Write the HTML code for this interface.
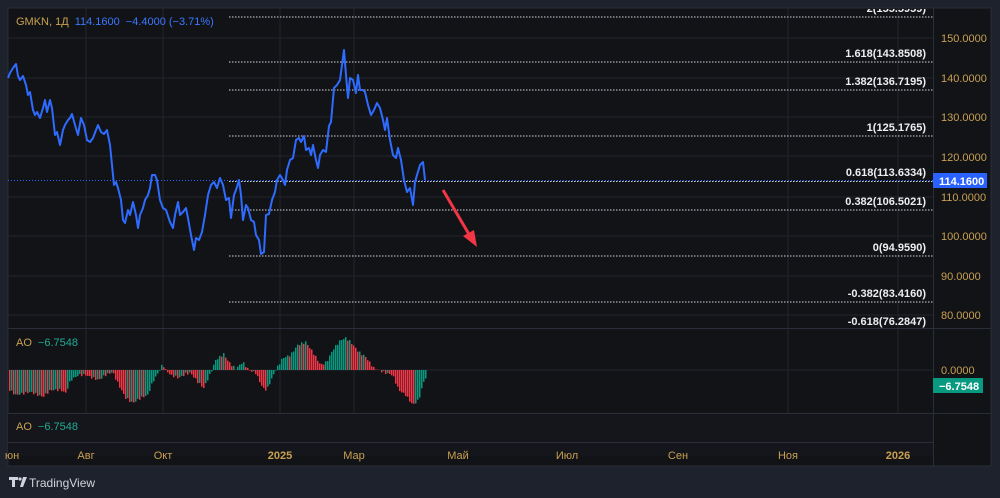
<!DOCTYPE html>
<html><head><meta charset="utf-8"><style>
body{margin:0;width:1000px;height:498px;background:#1e222d;overflow:hidden;font-family:"Liberation Sans",sans-serif}
svg{position:absolute;left:0;top:0}
</style></head><body>
<svg width="1000" height="498" xmlns="http://www.w3.org/2000/svg" font-family="Liberation Sans, sans-serif">
<defs><clipPath id="pc"><rect x="8" y="9" width="983" height="320"/></clipPath></defs>
<rect x="8" y="8" width="983" height="458" fill="#121317" stroke="#2a2e39"/>
<rect x="8" y="414" width="925" height="42" fill="#14161b"/>
<g stroke="#22252d" stroke-width="1">
<line x1="86" y1="8" x2="86" y2="413"/><line x1="163" y1="8" x2="163" y2="413"/><line x1="280" y1="8" x2="280" y2="413"/><line x1="354" y1="8" x2="354" y2="413"/><line x1="788" y1="8" x2="788" y2="413"/><line x1="898" y1="8" x2="898" y2="413"/>
<line x1="8" y1="38" x2="933" y2="38"/><line x1="8" y1="78" x2="933" y2="78"/><line x1="8" y1="117" x2="933" y2="117"/><line x1="8" y1="156" x2="933" y2="156"/><line x1="8" y1="197" x2="933" y2="197"/><line x1="8" y1="236" x2="933" y2="236"/><line x1="8" y1="276" x2="933" y2="276"/><line x1="8" y1="315" x2="933" y2="315"/>
<line x1="8" y1="370" x2="933" y2="370"/>
</g>
<g stroke="#2a2e39"><line x1="8" y1="328.5" x2="991" y2="328.5"/><line x1="8" y1="413.5" x2="991" y2="413.5"/><line x1="8" y1="442.5" x2="933" y2="442.5"/><line x1="933.5" y1="8" x2="933.5" y2="466"/></g>
<g stroke="#d1d4dc" stroke-dasharray="1.5 1.5" stroke-width="1">
<line x1="229" y1="17" x2="933" y2="17"/><line x1="229" y1="62" x2="933" y2="62"/><line x1="229" y1="90" x2="933" y2="90"/><line x1="229" y1="136" x2="933" y2="136"/><line x1="229" y1="181.5" x2="933" y2="181.5"/><line x1="229" y1="210" x2="933" y2="210"/><line x1="229" y1="256" x2="933" y2="256"/><line x1="229" y1="302" x2="933" y2="302"/>
</g>
<line x1="8" y1="180.5" x2="933" y2="180.5" stroke="#2962ff" stroke-dasharray="1 2"/>
<g fill="#eeeef0" font-size="11" font-weight="bold" text-anchor="end" clip-path="url(#pc)">
<text x="926" y="12">2(155.5959)</text><text x="926" y="57">1.618(143.8508)</text><text x="926" y="85">1.382(136.7195)</text><text x="926" y="131">1(125.1765)</text><text x="926" y="176">0.618(113.6334)</text><text x="926" y="205">0.382(106.5021)</text><text x="926" y="251">0(94.9590)</text><text x="926" y="297">-0.382(83.4160)</text><text x="926" y="325">-0.618(76.2847)</text>
</g>
<g fill="#c8a050" font-size="11">
<text x="941" y="42">150.0000</text><text x="941" y="82">140.0000</text><text x="941" y="121">130.0000</text><text x="941" y="161">120.0000</text><text x="941" y="201">110.0000</text><text x="941" y="240">100.0000</text><text x="941" y="280">90.0000</text><text x="941" y="319">80.0000</text><text x="941" y="374">0.0000</text>
</g>
<rect x="933" y="173" width="54" height="15" fill="#2962ff"/><text x="939" y="185" fill="#fff" font-size="11" font-weight="bold">114.1600</text>
<rect x="933" y="378" width="50" height="15" fill="#089981"/><text x="939" y="390" fill="#fff" font-size="11" font-weight="bold">−6.7548</text>
<polyline fill="none" stroke="#2e6bff" stroke-width="2" stroke-linejoin="round" points="8,78 10,73 13,68 16,64 18,76 20,80 23,76 26,85 28,95 30,92 33,110 35,115 37,112 40,118 43,108 45,100 47,112 50,100 52,108 55,135 57,132 60,145 63,130 65,125 68,120 70,118 72,114 75,125 78,135 81,118 84,125 87,140 90,142 93,138 96,130 98,125 101,132 104,134 107,130 110,145 112,165 114,185 116,182 118,188 121,200 123,220 125,223 128,210 130,215 133,202 136,215 138,228 140,215 143,208 145,200 148,195 150,188 152,175 155,175 157,180 160,200 163,208 166,210 170,222 173,228 175,215 178,202 180,215 183,212 186,208 188,218 191,235 194,250 196,238 199,240 202,232 205,215 208,195 211,185 214,182 217,188 220,178 223,185 226,200 229,198 231,218 234,195 236,190 239,180 241,195 243,220 246,205 248,208 251,220 254,222 256,235 259,240 261,254 264,252 266,215 269,214 272,200 275,192 277,180 280,175 283,180 285,185 287,170 290,160 293,158 296,140 299,138 301,142 304,136 306,150 309,148 311,155 313,145 316,160 318,168 320,155 323,150 326,152 329,126 331,122 334,88 337,85 340,80 342,65 344,50 346,75 348,98 350,78 353,80 356,93 358,75 360,90 363,90 365,92 368,105 371,115 374,110 377,103 380,108 383,120 385,130 387,118 390,140 393,155 396,158 398,148 401,160 404,180 407,192 410,188 413,205 415,182 417,175 420,165 423,162 425,180"/>
<g id="ao"></g>
<line x1="443" y1="190" x2="470" y2="236" stroke="#f23645" stroke-width="3"/>
<polygon points="477,247 463,236 474,230" fill="#f23645"/>
<text x="16" y="25" font-size="11"><tspan fill="#c8a050">GMKN, 1Д</tspan><tspan fill="#3b78ff" dx="6">114.1600</tspan><tspan fill="#3b78ff" dx="6">−4.4000 (−3.71%)</tspan></text>
<text x="16" y="346" font-size="11"><tspan fill="#c8a050">AO</tspan><tspan fill="#22ab94" dx="6">−6.7548</tspan></text>
<text x="16" y="430" font-size="11"><tspan fill="#c8a050">AO</tspan><tspan fill="#22ab94" dx="6">−6.7548</tspan></text>
<g fill="#c8a050" font-size="11" text-anchor="middle">
<text x="12" y="459">юн</text><text x="86" y="459">Авг</text><text x="163" y="459">Окт</text><text x="280" y="459" font-weight="bold">2025</text><text x="354" y="459">Мар</text><text x="458" y="459">Май</text><text x="567" y="459">Июл</text><text x="678" y="459">Сен</text><text x="788" y="459">Ноя</text><text x="898" y="459" font-weight="bold">2026</text>
</g>
<g fill="#d1d4dc"><path d="M9 477h9v3h-3v7h-3v-7h-3z"/><circle cx="20" cy="479" r="1.6"/><path d="M23 477h4l-4 10h-3z"/></g>
<text x="29" y="487" fill="#d1d4dc" font-size="12">TradingView</text>
</svg>
<script>
var k=[[9,-20],[15,-25],[30,-22],[42,-27],[50,-20],[60,-20],[65,-23],[70,-10],[78,-5],[85,-5],[92,-8],[98,-10],[105,-5],[112,-2],[118,-15],[125,-28],[132,-33],[140,-28],[147,-25],[152,-12],[158,-2],[162,6],[165,0],[170,-5],[178,-8],[185,-4],[190,-3],[197,-12],[203,-18],[210,-3],[215,10],[223,16],[228,8],[235,1],[242,8],[248,0],[255,-3],[262,-18],[266,-20],[275,0],[282,12],[290,15],[297,25],[305,28],[312,18],[320,5],[326,8],[332,20],[340,30],[345,32],[350,28],[358,18],[365,13],[373,2],[385,-3],[392,-5],[398,-20],[405,-25],[412,-35],[418,-30],[424,-8]];
function v(x){for(var i=0;i<k.length-1;i++){if(x<=k[i+1][0]){var t=(x-k[i][0])/(k[i+1][0]-k[i][0]);return k[i][1]+t*(k[i+1][1]-k[i][1]);}}return k[k.length-1][1];}
var s='',p=v(9);
for(var x=9;x<=425;x+=2){var h=v(x)+Math.sin(x*1.3)*1.2;var c=h>=p?'#089981':'#f23645';p=h;var y=h>0?370-h:370;s+='<rect x="'+x+'" y="'+y.toFixed(1)+'" width="1.5" height="'+Math.abs(h).toFixed(1)+'" fill="'+c+'"/>';}
document.getElementById('ao').innerHTML=s;
</script>
</body></html>
